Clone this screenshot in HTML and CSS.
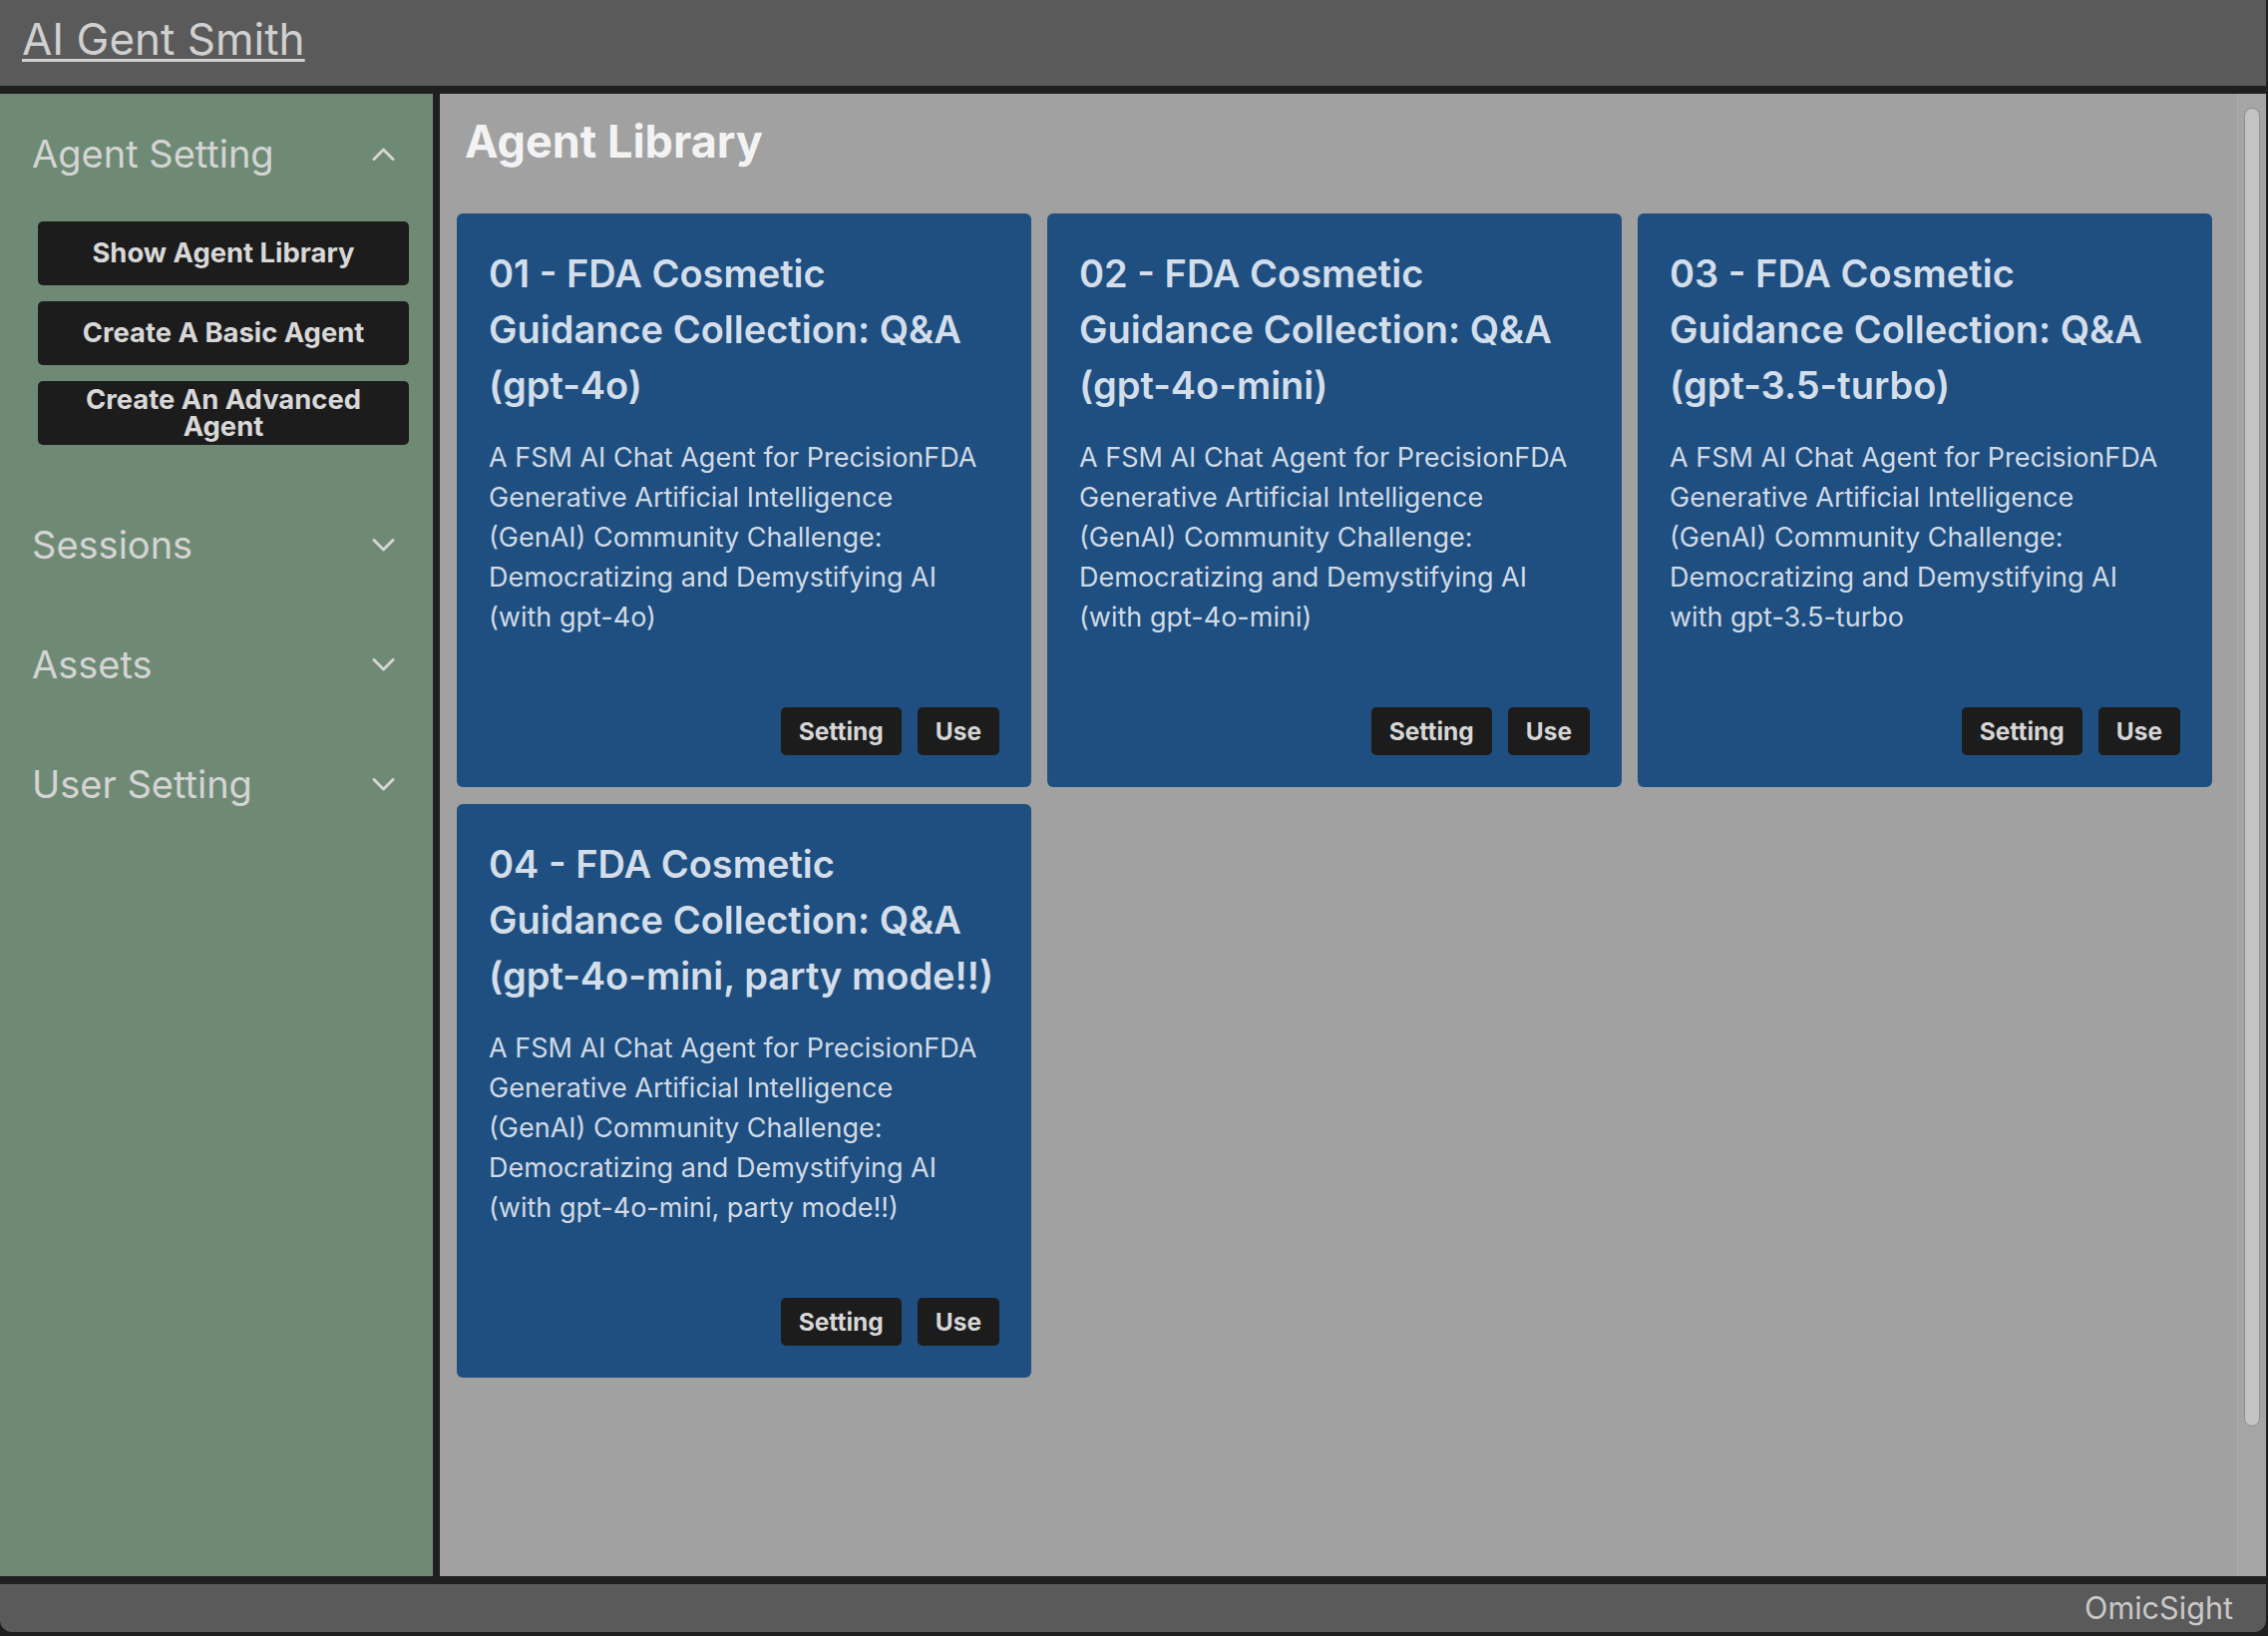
FILE: index.html
```html
<!DOCTYPE html>
<html lang="en">
<head>
<meta charset="utf-8">
<title>AI Gent Smith</title>
<link rel="stylesheet" href="styles.css">
</head>
<body>
<div class="app">
  <header class="topbar">
    <a class="brand" href="#">AI Gent Smith</a>
  </header>
  <div class="layout">
    <aside class="sidebar">
      <section class="acc">
        <div class="acc-head">
          <span>Agent Setting</span>
          <svg class="chev" viewBox="0 0 23 13" width="23" height="13"><path d="M2 11.5 L11.5 2 L21 11.5"/></svg>
        </div>
        <div class="acc-body">
          <button class="side-btn">Show Agent Library</button>
          <button class="side-btn">Create A Basic Agent</button>
          <button class="side-btn">Create An Advanced Agent</button>
        </div>
      </section>
      <section class="acc">
        <div class="acc-head">
          <span>Sessions</span>
          <svg class="chev" viewBox="0 0 23 13" width="23" height="13"><path d="M2 1.5 L11.5 11 L21 1.5"/></svg>
        </div>
      </section>
      <section class="acc">
        <div class="acc-head">
          <span>Assets</span>
          <svg class="chev" viewBox="0 0 23 13" width="23" height="13"><path d="M2 1.5 L11.5 11 L21 1.5"/></svg>
        </div>
      </section>
      <section class="acc">
        <div class="acc-head">
          <span>User Setting</span>
          <svg class="chev" viewBox="0 0 23 13" width="23" height="13"><path d="M2 1.5 L11.5 11 L21 1.5"/></svg>
        </div>
      </section>
    </aside>
    <main class="main">
      <div class="content">
        <h1 class="page-title">Agent Library</h1>
        <div class="grid">
          <div class="card">
            <h2 class="card-title">01 - FDA Cosmetic Guidance Collection: Q&amp;A (gpt-4o)</h2>
            <p class="card-desc">A FSM AI Chat Agent for PrecisionFDA Generative Artificial Intelligence (GenAI) Community Challenge: Democratizing and Demystifying AI (with gpt-4o)</p>
            <div class="card-actions"><button class="card-btn">Setting</button><button class="card-btn">Use</button></div>
          </div>
          <div class="card">
            <h2 class="card-title">02 - FDA Cosmetic Guidance Collection: Q&amp;A (gpt-4o-mini)</h2>
            <p class="card-desc">A FSM AI Chat Agent for PrecisionFDA Generative Artificial Intelligence (GenAI) Community Challenge: Democratizing and Demystifying AI (with gpt-4o-mini)</p>
            <div class="card-actions"><button class="card-btn">Setting</button><button class="card-btn">Use</button></div>
          </div>
          <div class="card">
            <h2 class="card-title">03 - FDA Cosmetic Guidance Collection: Q&amp;A (gpt-3.5-turbo)</h2>
            <p class="card-desc">A FSM AI Chat Agent for PrecisionFDA Generative Artificial Intelligence (GenAI) Community Challenge: Democratizing and Demystifying AI with gpt-3.5-turbo</p>
            <div class="card-actions"><button class="card-btn">Setting</button><button class="card-btn">Use</button></div>
          </div>
          <div class="card">
            <h2 class="card-title">04 - FDA Cosmetic Guidance Collection: Q&amp;A (gpt-4o-mini, party mode!!)</h2>
            <p class="card-desc">A FSM AI Chat Agent for PrecisionFDA Generative Artificial Intelligence (GenAI) Community Challenge: Democratizing and Demystifying AI (with gpt-4o-mini, party mode!!)</p>
            <div class="card-actions"><button class="card-btn">Setting</button><button class="card-btn">Use</button></div>
          </div>
        </div>
      </div>
      <div class="scrolltrack"><div class="thumb"></div></div>
    </main>
  </div>
  <footer class="footer">OmicSight</footer>
</div>
</body>
</html>
```
FILE: styles.css
```css
html, body {
  margin: 0;
  padding: 0;
  background: #1f1f1f;
  width: 2274px;
  height: 1640px;
  overflow: hidden;
}
* { box-sizing: border-box; }

.app {
  width: 2272px;
  height: 1636px;
  display: flex;
  flex-direction: column;
  background: #1f1f1f;
  border-radius: 0 0 12px 12px;
  overflow: hidden;
  font-family: Inter, "Liberation Sans", sans-serif;
}

.topbar {
  flex: none;
  height: 94px;
  background: #5a5a5a;
  border-bottom: 8px solid #1f1f1f;
  padding: 0 0 8px 22px;
  line-height: 78px;
}
.brand {
  font-size: 44px;
  font-weight: 400;
  color: #d0d0d0;
  text-decoration: underline;
  text-decoration-thickness: 3px;
  text-underline-offset: 4px;
}

.layout {
  flex: 1;
  display: flex;
  min-height: 0;
}

.sidebar {
  flex: none;
  width: 441px;
  background: #6f8a74;
  border-right: 7px solid #1f1f1f;
}
.acc-head {
  height: 120px;
  display: flex;
  align-items: center;
  justify-content: space-between;
  padding: 0 38px 0 32px;
  font-size: 38px;
  font-weight: 400;
  color: #d4d4d4;
}
.chev {
  fill: none;
  stroke: #d4d4d4;
  stroke-width: 3;
  stroke-linecap: round;
  stroke-linejoin: round;
}
.acc-body {
  display: flex;
  flex-direction: column;
  gap: 16px;
  padding: 8px 24px 40px 38px;
}
.side-btn {
  height: 64px;
  border: none;
  border-radius: 5px;
  background: #1c1c1c;
  color: #d8d8d8;
  font-family: Inter, "Liberation Sans", sans-serif;
  font-size: 27.4px;
  font-weight: 700;
  line-height: 1;
  padding: 0 16px;
}

.main {
  flex: 1;
  display: flex;
  background: #a1a1a1;
  min-width: 0;
}
.content {
  flex: 1;
  padding: 21px 0 0 17px;
}
.page-title {
  margin: 0 0 45px 8px;
  font-size: 45px;
  font-weight: 700;
  line-height: 54px;
  color: #f3f3f4;
}
.grid {
  display: grid;
  grid-template-columns: repeat(3, 576px);
  grid-auto-rows: 575px;
  column-gap: 16px;
  row-gap: 17px;
}
.card {
  background: #1e4f80;
  border-radius: 6px;
  padding: 32px;
  display: flex;
  flex-direction: column;
}
.card-title {
  margin: 0 0 25px;
  max-width: 512px;
  font-size: 38px;
  font-weight: 600;
  line-height: 56px;
  color: #d4deea;
}
.card-desc {
  margin: 0;
  max-width: 496px;
  font-size: 27px;
  font-weight: 400;
  line-height: 40px;
  color: #d0dae6;
}
.card-actions {
  margin-top: auto;
  display: flex;
  justify-content: flex-end;
  gap: 16px;
}
.card-btn {
  height: 48px;
  padding: 0 18px;
  border: none;
  border-radius: 5px;
  background: #1c1c1c;
  color: #d6d6d6;
  font-family: Inter, "Liberation Sans", sans-serif;
  font-size: 24.5px;
  font-weight: 700;
}

.scrolltrack {
  flex: none;
  width: 29px;
  background: #a5a5a5;
  border-left: 1px solid #adadad;
  padding: 14px 0 0 6px;
}
.thumb {
  width: 16px;
  height: 1322px;
  background: #c3c3c3;
  border: 1px solid #8f8f8f;
  border-radius: 8px;
}

.footer {
  flex: none;
  height: 56px;
  border-top: 8px solid #1f1f1f;
  background: #5a5a5a;
  text-align: right;
  padding-right: 33px;
  font-size: 30.6px;
  font-weight: 400;
  line-height: 48px;
  color: #c8c8c8;
}
```
